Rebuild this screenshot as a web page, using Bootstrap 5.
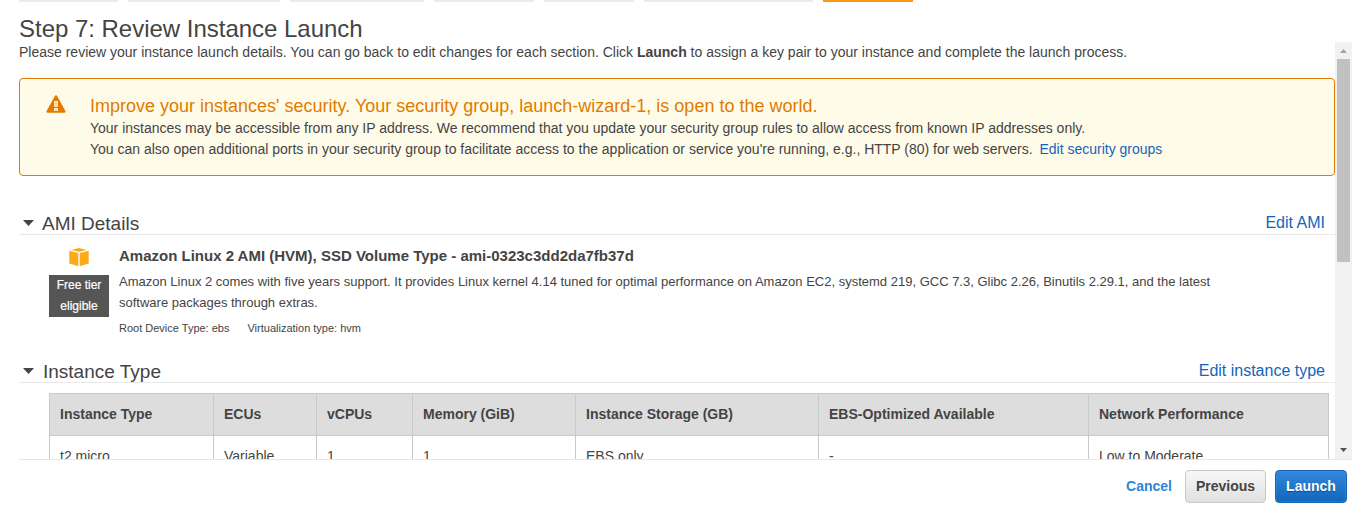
<!DOCTYPE html>
<html lang="en">
<head>
<meta charset="utf-8">
<meta name="viewport" content="width=device-width, initial-scale=1">
<title>Launch instance wizard</title>
<link href="https://cdn.jsdelivr.net/npm/bootstrap@5.3.0/dist/css/bootstrap.min.css" rel="stylesheet">
<style>
body{font-family:"Liberation Sans",Arial,sans-serif;font-size:14px;line-height:21px;color:#444;background:#fff;height:516px;overflow:hidden}
a{color:#1166bb;text-decoration:none}
.steps{gap:10px;height:2px;padding-left:19px}
.steps span{height:2px;background:#ebebeb}
.steps .current{background:#ff9811}
.page-title{font-size:24px;line-height:28px;height:40px;padding:13px 0 0 19px;font-weight:400;margin:0;white-space:nowrap;letter-spacing:-.02px}
.pane{height:418px;margin-left:19px;width:1333px;border-bottom:1px solid #e6e6e6}
.pane-body{width:1316px;overflow:hidden;white-space:nowrap}
.notice{margin-top:15px;height:98px;border:1px solid #df7b00;border-radius:4px;background:#fffbe9;padding:16px 0 0 26px}
.notice .words{margin-left:24px}
.notice .words div{letter-spacing:-.006px}
.notice .words a{margin-left:3px}
.notice h2{font-size:18px;line-height:23px;color:#df7b00;margin:0;font-weight:400}
.section-head{border-bottom:1px solid #e9e9e9;height:25px;padding:0 10px 0 4px}
.section-head h2{font-size:19px;line-height:25px;margin:2px 0 0 8px;font-weight:400}
.section-head .type-title{margin-left:9px}
.section-head a{font-size:16px;line-height:25px}
.section-head svg{margin-top:1px}
.ami{padding-left:30px;height:123px}
.tier{width:60px;height:42px;background:#555;color:#fff;font-size:12px;text-align:center;margin-top:8px;-webkit-text-stroke:.2px #fff}
.ami-text{margin-left:10px}
.ami-text h3{font-size:15px;line-height:21px;font-weight:700;margin:10px 0 5px}
.ami-text p{font-size:13px;line-height:21px;margin:0}
.meta{font-size:11px;line-height:16px;margin-top:7px;gap:18px}
.specs{width:1280px;margin:10px 0 0 30px;table-layout:fixed;border-collapse:collapse}
.specs th,.specs td{border:1px solid #c9c9c9;padding:0 10px;height:42px}
.specs th{background:#ddd}
.bar{width:17px;background:#f1f1f1}
.bar .thumb{width:13px;height:203px;background:#c1c1c1;margin-left:2px}
.foot{gap:9px;padding:10px 19px 0 0}
.foot .btn{height:33px;padding:0;font-size:14px;font-weight:700;line-height:31px;border-radius:4px}
.foot .prev{width:81px;color:#444;border:1px solid #c8c8c8;background:linear-gradient(#f7f7f7,#e0e0e0)}
.foot .go{width:72px;color:#fff;border:1px solid #1464b8;background:linear-gradient(#3388dd,#1166bb);box-shadow:inset 0 0 1px 1px #4a94e055;text-shadow:0 1px 1px #0a4a8f}
.foot .cancel{color:#2f84db;margin-right:4px;font-weight:700}
</style>
</head>
<body>
<div class="steps d-flex">
<span style="width:99px"></span><span style="width:152px"></span><span style="width:134px"></span><span style="width:100px"></span><span style="width:90px"></span><span style="width:169px"></span><span class="current" style="width:90px"></span>
</div>
<h1 class="page-title">Step 7: Review Instance Launch</h1>
<main class="pane d-flex">
<div class="pane-body">
<div>Please review your instance launch details. You can go back to edit changes for each section. Click <b>Launch</b> to assign a key pair to your instance and complete the launch process.</div>
<section class="notice d-flex align-items-start">
<svg width="20" height="18" viewBox="0 0 20 18"><path d="M10 0.3Q10.8.3 11.4 1.4L19.4 16Q20 17.6 18.6 17.8H1.4Q0 17.6.6 16L8.6 1.4Q9.2.3 10 .3Z" fill="#df7b00"/><path d="M8.1 6h3.8v5.8H8.1zM8.1 13h3.8v3H8.1z" fill="#fff3d4"/><path d="M9.2 7h1.6v3.8H9.2zM9.2 13.8h1.6v1.4H9.2z" fill="#df7b00" opacity=".35"/></svg>
<div class="words">
<h2>Improve your instances' security. Your security group, launch-wizard-1, is open to the world.</h2>
<div>Your instances may be accessible from any IP address. We recommend that you update your security group rules to allow access from known IP addresses only.</div>
<div>You can also open additional ports in your security group to facilitate access to the application or service you're running, e.g., HTTP (80) for web servers. <a href="#">Edit security groups</a></div>
</div>
</section>
<div class="section-head d-flex align-items-center" style="margin-top:34px">
<svg width="11" height="6" viewBox="0 0 11 6"><path d="M0 0h11L5.5 6z" fill="#444"/></svg>
<h2>AMI Details</h2><a href="#" class="ms-auto">Edit AMI</a>
</div>
<section class="ami d-flex">
<div class="text-center" style="padding-top:12px">
<svg class="d-block mx-auto" width="20" height="20" viewBox="0 0 20 20" fill="#fbab18"><path d="M2.300 2.900L10 .9l7.700 2L10 4.700zM.3 3.700L9.300 6.100V19.200L.3 16.600zM19.700 3.700L10.700 6.100V19.200L19.700 16.600z"/></svg>
<div class="tier">Free tier<br>eligible</div>
</div>
<div class="ami-text">
<h3>Amazon Linux 2 AMI (HVM), SSD Volume Type - ami-0323c3dd2da7fb37d</h3>
<p>Amazon Linux 2 comes with five years support. It provides Linux kernel 4.14 tuned for optimal performance on Amazon EC2, systemd 219, GCC 7.3, Glibc 2.26, Binutils 2.29.1, and the latest<br>software packages through extras.</p>
<div class="meta d-flex"><span>Root Device Type: ebs</span><span>Virtualization type: hvm</span></div>
</div>
</section>
<div class="section-head d-flex align-items-center">
<svg width="11" height="6" viewBox="0 0 11 6"><path d="M0 0h11L5.500 6z" fill="#444"/></svg>
<h2 class="type-title">Instance Type</h2><a href="#" class="ms-auto">Edit instance type</a>
</div>
<table class="specs">
<colgroup><col style="width:164px"><col style="width:103px"><col style="width:96px"><col style="width:163px"><col style="width:243px"><col style="width:270px"><col style="width:240px"></colgroup>
<tr><th>Instance Type</th><th>ECUs</th><th>vCPUs</th><th>Memory (GiB)</th><th>Instance Storage (GB)</th><th>EBS-Optimized Available</th><th>Network Performance</th></tr>
<tr><td>t2.micro</td><td>Variable</td><td>1</td><td>1</td><td>EBS only</td><td>-</td><td>Low to Moderate</td></tr>
</table>
</div>
<div class="bar d-flex flex-column">
<svg width="17" height="17" viewBox="0 0 17 17"><path d="M5 11h7L8.500 7z" fill="#a3a3a3"/></svg>
<div class="thumb"></div>
<svg class="mt-auto" width="17" height="17" viewBox="0 0 17 17"><path d="M5 6h7L8.500 10z" fill="#505050"/></svg>
</div>
</main>
<footer class="foot d-flex justify-content-end align-items-center">
<a href="#" class="cancel">Cancel</a>
<button class="btn prev">Previous</button>
<button class="btn go">Launch</button>
</footer>
<script src="https://cdn.jsdelivr.net/npm/bootstrap@5.3.0/dist/js/bootstrap.bundle.min.js"></script>
</body>
</html>
